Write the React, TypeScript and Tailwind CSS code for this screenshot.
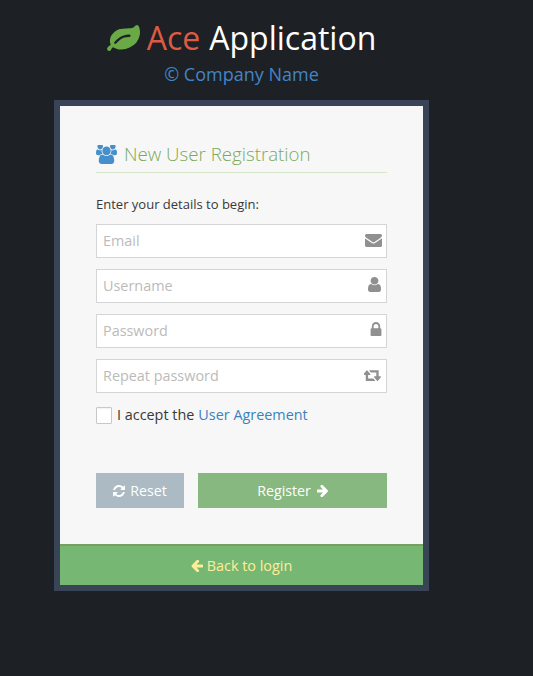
import type { ReactNode } from 'react';

// Font Awesome 4 glyphs, the FA5 set in react-icons is too thin for this theme
const paths = {
  leaf: 'M1280 704q0-26-19-45t-45-19q-172 0-318 49.5t-259.5 134-235.5 219.5q-19 21-19 45 0 26 19 45t45 19q24 0 45-19 27-24 74-71t67-66q137-124 268.5-176t313.5-52q26 0 45-19t19-45zm512-198q0 95-20 193-46 224-184.5 383t-357.5 268q-214 108-438 108-148 0-286-47-15-5-88-42t-96-37q-16 0-39.5 32t-45 70-52.5 70-60 32q-30 0-51-11t-31-24-27-42q-2-4-6-11t-5.5-10-3-9.5-1.5-13.5q0-35 31-73.5t68-65.5 68-56 31-48q0-4-14-38t-16-44q-9-51-9-104 0-115 43.5-220t119-184.5 170.5-139 204-95.5q55-18 145-25.5t179.5-9 178.5-6 163.5-24 113.5-56.5l29.5-29.5 29.5-28 27-20 36.5-16 43.5-4.5q39 0 70.5 46t47.5 112 24 124 8 96z',
  users: 'M593 896q-162 5-265 128h-134q-82 0-138-40.5t-56-118.5q0-353 124-353 6 0 43.5 21t97.5 42.5 119 21.5q67 0 133-23-5 37-5 66 0 139 81 256zm1071 637q0 120-73 189.5t-194 69.5h-874q-121 0-194-69.5t-73-189.5q0-53 3.5-103.5t14-109 26.5-108.5 43-97.5 62-81 85.5-53.5 111.5-20q10 0 43 21.5t73 48 107 48 135 21.5 135-21.5 107-48 73-48 43-21.5q61 0 111.5 20t85.5 53.5 62 81 43 97.5 26.5 108.5 14 109 3.5 103.5zm-1024-1277q0 106-75 181t-181 75-181-75-75-181 75-181 181-75 181 75 75 181zm704 384q0 159-112.5 271.5t-271.5 112.5-271.5-112.5-112.5-271.5 112.5-271.5 271.5-112.5 271.5 112.5 112.5 271.5zm576 225q0 78-56 118.5t-138 40.5h-134q-103-123-265-128 81-117 81-256 0-29-5-66 66 23 133 23 59 0 119-21.5t97.5-42.5 43.5-21q124 0 124 353zm-128-609q0 106-75 181t-181 75-181-75-75-181 75-181 181-75 181 75 75 181z',
  envelope: 'M1792 710v794q0 66-47 113t-113 47h-1472q-66 0-113-47t-47-113v-794q44 49 101 87 362 246 497 345 57 42 92.5 65.5t94.5 48 110 24.5h2q51 0 110-24.5t94.5-48 92.5-65.5q170-123 498-345 57-39 100-87zm0-294q0 79-49 151t-122 123q-376 261-468 325-10 7-42.5 30.5t-54 38-52 32.5-57.5 27-50 9h-2q-23 0-50-9t-57.5-27-52-32.5-54-38-42.5-30.5q-91-64-262-182.5t-205-142.5q-62-42-117-115.5t-55-136.5q0-78 41.5-130t118.5-52h1472q65 0 112.5 47t47.5 113z',
  user: 'M1536 1399q0 109-62.5 187t-150.5 78h-854q-88 0-150.5-78t-62.5-187q0-85 8.5-160.5t31.5-152 58.5-131 94-89 134.5-34.5q131 128 313 128t313-128q76 0 134.5 34.5t94 89 58.5 131 31.5 152 8.5 160.5zm-256-887q0 159-112.5 271.5t-271.5 112.5-271.5-112.5-112.5-271.5 112.5-271.5 271.5-112.5 271.5 112.5 112.5 271.5z',
  lock: 'M640 768h512v-192q0-106-75-181t-181-75-181 75-75 181v192zm832 96v576q0 40-28 68t-68 28h-960q-40 0-68-28t-28-68v-576q0-40 28-68t68-28h32v-192q0-184 132-316t316-132 316 132 132 316v192h32q40 0 68 28t28 68z',
  retweet: 'M1216 1504q0 13-9.5 22.5t-22.5 9.5h-960q-8 0-13.5-2t-9-7-5.5-8-3-11.5-1-11.5v-600h-192q-26 0-45-19t-19-45q0-24 15-41l320-384q19-22 49-22t49 22l320 384q15 17 15 41 0 26-19 45t-45 19h-192v384h576q16 0 25 11l160 192q7 11 7 21zm640-416q0 24-15 41l-320 384q-20 23-49 23t-49-23l-320-384q-15-17-15-41 0-26 19-45t45-19h192v-384h-576q-16 0-25-12l-160-192q-7-9-7-20 0-13 9.5-22.5t22.5-9.5h960q8 0 13.5 2t9 7 5.5 8.5 3 11.5 1 11.5v600h192q26 0 45 19t19 45z',
  refresh: 'M1639 1056q0 5-1 7-64 268-268 434.5t-478 166.5q-146 0-282.5-55t-243.5-157l-129 129q-19 19-45 19t-45-19-19-45v-448q0-26 19-45t45-19h448q26 0 45 19t19 45-19 45l-137 137q71 66 161 102t187 36q134 0 250-65t186-179q11-17 53-117 8-23 30-23h192q13 0 22.5 9.5t9.5 22.5zm25-800v448q0 26-19 45t-45 19h-448q-26 0-45-19t-19-45 19-45l138-138q-148-137-349-137-134 0-250 65t-186 179q-11 17-53 117-8 23-30 23h-199q-13 0-22.5-9.5t-9.5-22.5v-7q65-268 270-434.5t480-166.5q146 0 284 55.5t245 156.5l130-129q19-19 45-19t45 19 19 45z',
  arrowRight: 'M1600 960q0 54-37 91l-651 651q-39 37-91 37-51 0-90-37l-75-75q-38-38-38-91t38-91l293-293h-704q-52 0-84.5-37.5t-32.5-90.5v-128q0-53 32.5-90.5t84.5-37.5h704l-293-294q-38-36-38-90t38-90l75-75q38-38 90-38 53 0 91 38l651 651q37 35 37 90z',
  arrowLeft: 'M1664 896v128q0 53-32.5 90.5t-84.5 37.5h-704l293 294q38 36 38 90t-38 90l-75 76q-37 37-90 37-52 0-91-37l-651-652q-37-37-37-90 0-52 37-91l651-650q38-38 91-38 52 0 90 38l75 74q38 38 38 91t-38 91l-293 293h704q52 0 84.5 37.5t32.5 90.5z',
};

function Icon({ d, box, className }: { d: string; box: string; className: string }) {
  return (
    <svg viewBox={box} preserveAspectRatio="none" fill="currentColor" className={`block shrink-0 ${className}`}>
      <path d={d} />
    </svg>
  );
}

const fields: { placeholder: string; icon: ReactNode }[] = [
  {
    placeholder: 'Email',
    icon: <Icon d={paths.envelope} box="0 256 1792 1408" className="mb-[2px] -mr-[1px] h-[13px] w-[17px]" />,
  },
  {
    placeholder: 'Username',
    icon: <Icon d={paths.user} box="256 128 1280 1536" className="mb-[4px] h-[15px] w-[13px]" />,
  },
  {
    placeholder: 'Password',
    icon: <Icon d={paths.lock} box="256 128 1280 1408" className="mb-[5px] -mr-[1px] h-[14px] w-[12px]" />,
  },
  {
    placeholder: 'Repeat password',
    icon: <Icon d={paths.retweet} box="0 256 1856 1280" className="mb-[3px] h-[12px] w-[17px]" />,
  },
];

export default function App() {
  return (
    <div className="min-h-[676px] bg-[#1d2024] pl-[54px] font-['Open_Sans',sans-serif]">
      <div className="w-[375px]">
        <div className="flex h-[100px] flex-col items-center pt-[16px]">
          <h1 className="flex h-[44px] items-center text-[32px] font-normal leading-[44px]">
            <Icon d={paths.leaf} box="0 124 1792 1410" className="mr-[7px] h-[26px] w-[33px] text-[#69aa46]" />
            <span className="text-[#dd5a43]">Ace</span>
            <span className="ml-[9px] text-white">Application</span>
          </h1>
          <h4 className="mt-[1px] text-[18px] leading-[26px] text-[#4285c9]">© Company Name</h4>
        </div>

        <div className="border-[6px] border-[#394557] bg-[#f7f7f7]">
          <div className="h-[438px] px-[36px] pt-[36px]">
            <h4 className="flex h-[31px] items-start border-b border-[#d5e7c8] text-[18.7px] font-light leading-[24px] text-[#7aa95c]">
              <Icon d={paths.users} box="0 128 1920 1664" className="mr-[7px] mt-[3px] h-[19px] w-[21px] text-[#478fca]" />
              New User Registration
            </h4>
            <p className="mt-[22px] text-[13px] leading-[18px] text-[#393939]">Enter your details to begin:</p>

            <div className="mt-[11px] flex flex-col gap-[11px]">
              {fields.map((f) => (
                <div
                  key={f.placeholder}
                  className="flex h-[34px] items-center justify-between border border-[#d5d5d5] bg-white pl-[6px] pr-[5px]"
                >
                  <input
                    placeholder={f.placeholder}
                    className="h-[32px] w-[220px] bg-transparent pb-[2px] text-[14.4px] outline-none placeholder:text-[#bbb]"
                  />
                  <span className="flex justify-end text-[#909090]">{f.icon}</span>
                </div>
              ))}
            </div>

            <label className="mt-[12px] flex items-center text-[14.4px] leading-[20px] text-[#393939]">
              <span className="mr-[5px] h-[17px] w-[16px] rounded-[1px] border border-[#c8c8c8] bg-white shadow-[inset_0_1px_1px_rgba(0,0,0,0.05)]" />
              <span>I accept the</span>
              <a className="ml-[4px] text-[#3a82bd]">User Agreement</a>
            </label>

            <div className="mt-[48px] flex gap-[14px] text-[14.2px] text-white">
              <button className="flex h-[35px] w-[88px] items-center justify-center gap-[5px] bg-[#abbac3]">
                <Icon d={paths.refresh} box="128 128 1536 1536" className="h-[12px] w-[12px]" />
                Reset
              </button>
              <button className="flex h-[35px] w-[189px] items-center justify-center gap-[6px] bg-[#87b87f]">
                Register
                <Icon d={paths.arrowRight} box="192 218 1408 1484" className="h-[12px] w-[11px]" />
              </button>
            </div>
          </div>
          <div className="flex h-[41px] items-center justify-center gap-[4px] border-t-2 border-[#7b9e5e] bg-[#76b774] text-[14.4px] text-[#fe9]">
            <Icon d={paths.arrowLeft} box="128 218 1536 1484" className="h-[12px] w-[12px]" />
            Back to login
          </div>
        </div>
      </div>
    </div>
  );
}
